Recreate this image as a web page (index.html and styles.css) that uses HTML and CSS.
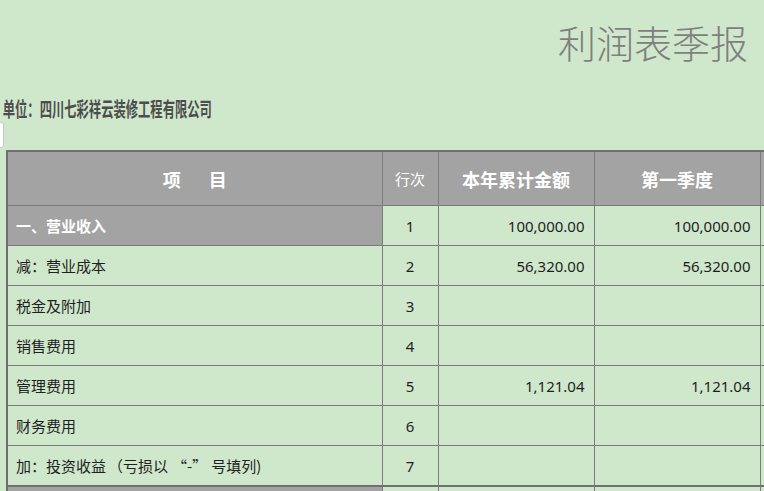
FILE: index.html
```html
<!DOCTYPE html>
<html lang="zh">
<head>
<meta charset="utf-8">
<title>利润表季报</title>
<link rel="stylesheet" href="styles.css">
</head>
<body>
<div class="page">
  <div class="title-bar"><h1 class="title">利润表季报</h1></div>
  <div class="unit-bar"><span class="unit">单位：四川七彩祥云装修工程有限公司</span></div>
  <div class="tab-bar"><div class="tab"></div></div>
  <table class="sheet">
    <colgroup>
      <col class="c-item"><col class="c-no"><col class="c-year"><col class="c-q1"><col class="c-more">
    </colgroup>
    <thead>
      <tr class="head">
        <th class="h-item">项<span class="gap"></span>目</th>
        <th class="h-no">行次</th>
        <th>本年累计金额</th>
        <th>第一季度</th>
        <th></th>
      </tr>
    </thead>
    <tbody>
      <tr><td class="item strong">一、营业收入</td><td class="no">1</td><td class="num">100,000.00</td><td class="num">100,000.00</td><td></td></tr>
      <tr><td class="item">减：营业成本</td><td class="no">2</td><td class="num">56,320.00</td><td class="num">56,320.00</td><td></td></tr>
      <tr><td class="item">税金及附加</td><td class="no">3</td><td class="num"></td><td class="num"></td><td></td></tr>
      <tr><td class="item">销售费用</td><td class="no">4</td><td class="num"></td><td class="num"></td><td></td></tr>
      <tr><td class="item">管理费用</td><td class="no">5</td><td class="num">1,121.04</td><td class="num">1,121.04</td><td></td></tr>
      <tr><td class="item">财务费用</td><td class="no">6</td><td class="num"></td><td class="num"></td><td></td></tr>
      <tr><td class="item">加：投资收益<span class="paren">（</span>亏损以<span class="quote">“-”</span>号填列)</td><td class="no">7</td><td class="num"></td><td class="num"></td><td></td></tr>
      <tr class="sep"><td class="item strong"></td><td class="no"></td><td class="num"></td><td class="num"></td><td></td></tr>
    </tbody>
  </table>
</div>
</body>
</html>
```
FILE: styles.css
```css
html, body {
  margin: 0;
  padding: 0;
  background: #cfe7cb;
  overflow: hidden;
}
.page {
  width: 764px;
  height: 491px;
  overflow: hidden;
  font-family: "Noto Sans", "Noto Sans CJK SC", sans-serif;
}
.title-bar {
  height: 96px;
  display: flex;
  justify-content: flex-end;
  align-items: flex-start;
  padding-right: 16px;
  box-sizing: border-box;
}
.title {
  margin: 18px 0 0 0;
  font-family: "Noto Sans CJK SC", sans-serif;
  font-weight: 300;
  font-size: 38px;
  line-height: 48px;
  color: #7f7f7f;
}
.unit-bar {
  height: 26px;
  white-space: nowrap;
}
.unit {
  display: inline-block;
  font-family: "Noto Sans CJK SC", serif;
  font-weight: 700;
  font-size: 20px;
  line-height: 26px;
  color: #4d4d4d;
  transform: scaleX(0.615);
  transform-origin: 2px 0;
  margin-left: 2px;
}
.tab-bar {
  height: 28px;
}
.tab {
  width: 11px;
  height: 26px;
  margin-left: -7px;
  background: #fff;
  border: 1px solid #c8c8c8;
  border-radius: 3px;
  box-sizing: border-box;
}
.sheet {
  border-collapse: collapse;
  table-layout: fixed;
  margin-left: 6px;
  width: 860px;
  border-top: 2px solid #707070;
  border-left: 2px solid #707070;
}
.c-item { width: 375px; }
.c-no { width: 56px; }
.c-year { width: 156px; }
.c-q1 { width: 166px; }
.c-more { width: 107px; }
.sheet th, .sheet td {
  border: 1px solid #7c7c7c;
  padding: 0;
  vertical-align: middle;
}
.head th {
  height: 53px;
  background: #a3a3a3;
  color: #fff;
  font-family: "Noto Sans CJK SC", sans-serif;
  font-weight: 700;
  font-size: 18px;
  text-align: center;
}
.head .h-no {
  font-weight: 400;
  font-size: 15px;
}
.gap {
  display: inline-block;
  width: 28px;
}
.sheet td {
  height: 39px;
  font-size: 15px;
  color: #1f1f1f;
}
.item {
  padding-left: 8px !important;
  font-family: "Noto Sans CJK SC", sans-serif;
  white-space: nowrap;
}
.paren {
  margin-left: 2px;
}
.quote {
  padding: 0 4px;
}
.item.strong {
  background: #a3a3a3;
  color: #fff;
  font-weight: 700;
}
.no {
  text-align: center;
}
.num {
  text-align: right;
  padding-right: 9px !important;
}
.sep td {
  border-top: 2px solid #707070;
}
```
